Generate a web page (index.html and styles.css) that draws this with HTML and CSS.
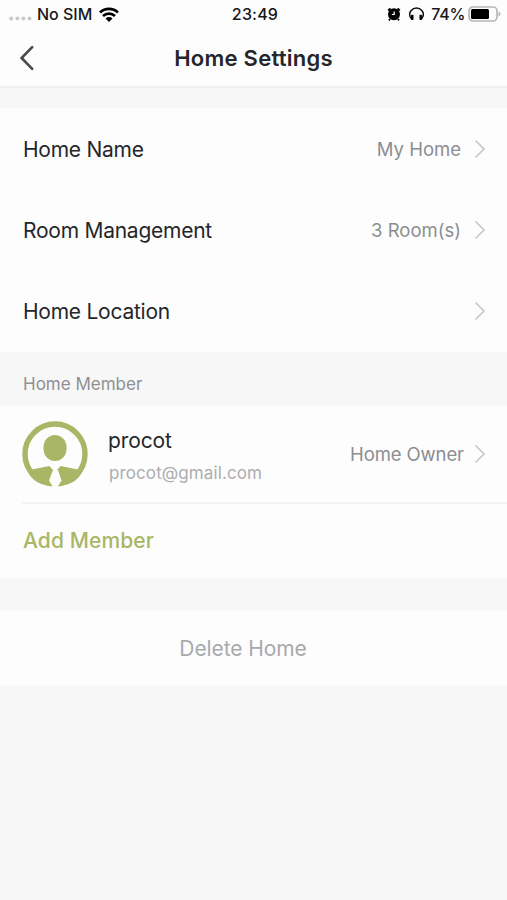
FILE: index.html
```html
<!DOCTYPE html>
<html lang="en">
<head>
    <meta charset="utf-8">
    <meta name="viewport" content="width=device-width, initial-scale=1">
    <title>Home Settings</title>
    <link rel="stylesheet" href="styles.css">
</head>
<body>
    <header class="header">
        <div class="status-bar">
            <div class="status-left">
                <svg class="signal" width="24" height="5" viewBox="0 0 24 5">
                    <circle cx="2.2" cy="2.5" r="2" />
                    <circle cx="8.4" cy="2.5" r="2" />
                    <circle cx="14.4" cy="2.5" r="2" />
                    <circle cx="20.5" cy="2.5" r="2" />
                </svg>
                <span class="carrier">No SIM</span>
                <svg class="wifi" width="20" height="15" viewBox="0 0 20 15">
                    <path d="M1 5.5a13 13 0 0 1 18 0" />
                    <path d="M4 9a8.7 8.7 0 0 1 12 0" />
                    <path class="wifi-dot" d="M6.5 11.4a5 5 0 0 1 7 0L10 15z" />
                </svg>
            </div>
            <span class="time">23:49</span>
            <div class="status-right">
                <svg class="alarm" width="14" height="14" viewBox="0 0 14 14">
                    <circle cx="7" cy="7.2" r="6" />
                    <path class="alarm-bells" d="M1.2 3.4l2.3-2M12.8 3.4l-2.3-2M3 12l-1 1.3M11 12l1 1.3" />
                    <path class="alarm-hands" d="M7.2 4.5v3H4.8" />
                </svg>
                <svg class="headphones" width="15" height="14" viewBox="0 0 15 14">
                    <path d="M2.6 12C.2 9.2.3 5.8 2.2 3.5c2.6-3.2 8-3.2 10.6 0 1.9 2.3 2 5.7-.4 8.5" />
                    <rect x="2" y="7.8" width="2.5" height="5.2" rx=".7" />
                    <rect x="10.5" y="7.8" width="2.5" height="5.2" rx=".7" />
                </svg>
                <span class="percent">74%</span>
                <svg class="battery" width="33" height="16" viewBox="0 0 33 16">
                    <rect class="battery-case" x="1" y="1" width="28" height="14" rx="4" />
                    <rect x="3" y="3" width="18" height="10" rx="1.5" />
                    <path class="battery-tip" d="M30.5 5.5q2 .7 2 2.5t-2 2.5z" />
                </svg>
            </div>
        </div>
        <nav class="nav-bar">
            <svg class="back" width="16" height="26" viewBox="0 0 16 26">
                <path d="M13.2 2.2L2.6 13l10.6 10.8" />
            </svg>
            <h1 class="title">Home Settings</h1>
        </nav>
    </header>

    <section class="list">
        <div class="row">
            <span class="label">Home Name</span>
            <span class="value">My Home</span>
            <svg class="chevron" width="12" height="20" viewBox="0 0 12 20"><path d="M1.5 1.5L10 10l-8.5 8.5" /></svg>
        </div>
        <div class="row">
            <span class="label">Room Management</span>
            <span class="value">3 Room(s)</span>
            <svg class="chevron" width="12" height="20" viewBox="0 0 12 20"><path d="M1.5 1.5L10 10l-8.5 8.5" /></svg>
        </div>
        <div class="row">
            <span class="label">Home Location</span>
            <svg class="chevron" width="12" height="20" viewBox="0 0 12 20"><path d="M1.5 1.5L10 10l-8.5 8.5" /></svg>
        </div>
    </section>

    <h2 class="section-title">Home Member</h2>

    <section class="members">
        <div class="member">
            <svg class="avatar" width="66" height="66" viewBox="0 0 66 66">
                <circle class="avatar-ring" cx="33" cy="33" r="30" />
                <rect x="21.5" y="14" width="23" height="26" rx="11.5" ry="12" />
                <path d="M6 51l4-2.5L27.3 45l4.2 4.500v15.500C20 65 10 60 6 51z" />
                <path d="M60 51l-4-2.500L38.700 45l-4.200 4.500v15.500C46 65 56 60 60 51z" />
                <path class="avatar-tie" d="M31 49h5l3.500 10.500L35.500 66h-4.500l-4-6.500z" />
            </svg>
            <div class="member-info">
                <span class="member-name">procot</span>
                <span class="member-email">procot@gmail.com</span>
            </div>
            <span class="value owner">Home Owner</span>
            <svg class="chevron" width="12" height="20" viewBox="0 0 12 20"><path d="M1.5 1.5L10 10l-8.5 8.5" /></svg>
        </div>
        <div class="add-member">Add Member</div>
    </section>

    <div class="delete-home">Delete Home</div>
</body>
</html>
```
FILE: styles.css
```css
* {
    box-sizing: border-box;
}

body {
    margin: 0;
    min-height: 900px;
    background: #f7f7f7;
    color: #25262a;
    font-family: Inter, "Liberation Sans", sans-serif;
}

svg {
    display: block;
    flex: none;
}

.header {
    height: 88px;
    background: #fdfdfd;
    border-bottom: 2px solid #f0f0f0;
}

.status-bar {
    display: grid;
    grid-template-columns: 1fr auto 1fr;
    align-items: center;
    height: 28px;
    padding: 0 6px 0 9px;
    font-size: 16px;
    font-weight: 500;
    color: #171717;
}

.status-left,
.status-right {
    display: flex;
    align-items: center;
}

.status-right {
    justify-content: flex-end;
}

.signal {
    margin: 9px 4px 0 0;
    fill: #c9c9c9;
}

.wifi {
    margin-left: 7px;
    fill: none;
    stroke: #000;
    stroke-width: 2.7;
}

.wifi .wifi-dot {
    fill: #000;
    stroke: none;
}

.time {
    letter-spacing: 0.2px;
}

.percent {
    letter-spacing: -0.3px;
}

.alarm-bells {
    stroke: #000;
    stroke-width: 2;
}

.alarm-hands {
    fill: none;
    stroke: #fff;
    stroke-width: 1.2;
}

.headphones {
    margin: 0 7px 0 8px;
}

.headphones path {
    fill: none;
    stroke: #111;
    stroke-width: 1.5;
}

.battery {
    margin-left: 3px;
}

.battery-case {
    fill: none;
    stroke: #b7b7b7;
    stroke-width: 1.7;
}

.battery-tip {
    fill: #b7b7b7;
}

.nav-bar {
    display: grid;
    grid-template-columns: 40px 1fr 40px;
    align-items: center;
    height: 59px;
    padding: 0 18px;
}

.back {
    margin-left: 1px;
    fill: none;
    stroke: #48494b;
    stroke-width: 2.6;
    stroke-linecap: round;
}

.title {
    margin: 0;
    font-size: 22px;
    font-weight: 600;
    letter-spacing: 0.25px;
    text-align: center;
}

.list {
    margin-top: 20px;
    height: 244px;
    background: #fdfdfd;
}

.row {
    display: flex;
    align-items: center;
    height: 81px;
    padding: 2px 21px 0 23px;
}

.label {
    font-size: 21px;
    letter-spacing: -0.25px;
}

.value {
    margin-left: auto;
    padding-bottom: 1px;
    font-size: 18.5px;
    color: #8c8d90;
}

.chevron {
    margin: 0 0 1px 13px;
    fill: none;
    stroke: #c8c8c8;
    stroke-width: 1.7;
}

.label + .chevron {
    margin-left: auto;
}

.section-title {
    display: flex;
    align-items: center;
    height: 54px;
    margin: 0;
    padding: 10px 23px 0;
    font-size: 17px;
    font-weight: 400;
    color: #8f9093;
}

.members {
    background: #fdfdfd;
}

.member {
    display: flex;
    align-items: center;
    height: 98px;
    margin-left: 22px;
    padding-right: 21px;
    border-bottom: 2px solid #f4f4f4;
}

.avatar {
    fill: #a9b665;
}

.avatar-ring {
    fill: none;
    stroke: #a9b665;
    stroke-width: 5.4;
}

.avatar-tie {
    fill: #fdfdfd;
}

.member-info {
    display: flex;
    flex-direction: column;
    gap: 8px;
    margin-left: 20px;
    padding-top: 3px;
}

.member-name {
    font-size: 21px;
    line-height: 26px;
    letter-spacing: -0.1px;
}

.member-email {
    padding-left: 1px;
    font-size: 17px;
    line-height: 22px;
    letter-spacing: 0.1px;
    color: #acadb0;
}

.owner {
    padding-bottom: 0;
    letter-spacing: -0.1px;
}

.owner + .chevron {
    margin: 0 0 0 10px;
}

.add-member {
    display: flex;
    align-items: center;
    height: 74px;
    padding: 0 0 1px 23px;
    font-size: 21px;
    font-weight: 500;
    letter-spacing: 0.1px;
    color: #a9b665;
}

.delete-home {
    display: flex;
    align-items: center;
    justify-content: center;
    height: 76px;
    margin-top: 32px;
    padding-right: 21px;
    background: #fdfdfd;
    font-size: 21px;
    letter-spacing: -0.1px;
    color: #a8a9ad;
}
```
